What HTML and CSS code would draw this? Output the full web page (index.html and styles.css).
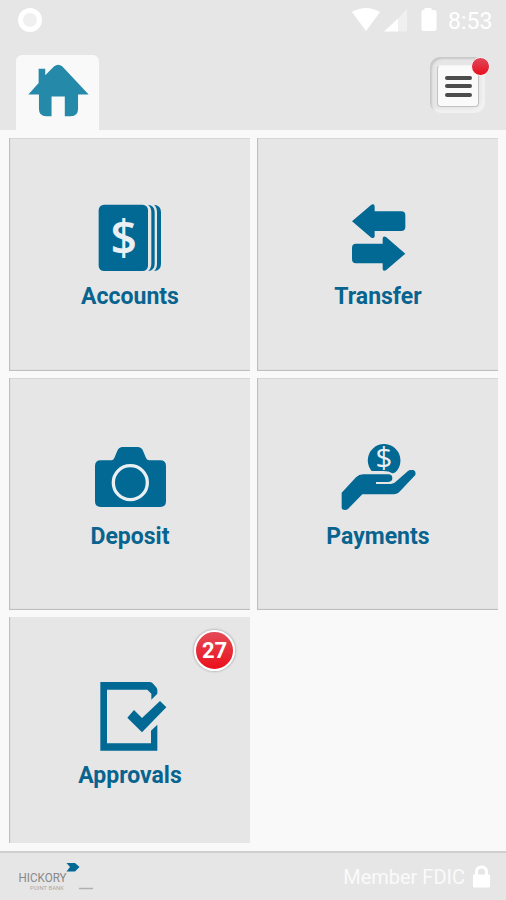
FILE: index.html
```
<!DOCTYPE html>
<html lang="en">
<head>
  <meta charset="UTF-8" />
  <meta name="viewport" content="width=device-width, initial-scale=1.0" />
  <title>Hickory Point Bank</title>
  <link rel="stylesheet" href="styles.css">
</head>
<body>
  <header class="header">
    <div class="status-bar">
      <span class="status-ring"></span>
      <svg class="status-icons" viewBox="0 0 86 26" width="86" height="26">
        <path d="M0 4Q14-4 28 4L14 23Z" />
        <path d="M32 23.500L46 10.500V23.500Z" />
        <path class="faint" d="M46 10.500L55 1V23.500H46Z" />
        <path d="M72.500 0h7v2h3q2 0 2 2v17q0 2-2 2h-11q-2 0-2-2V4q0-2 2-2h1Z" />
      </svg>
      <span class="clock">8:53</span>
    </div>
    <nav class="nav">
      <a class="home-tab" href="#" aria-label="Home">
        <svg viewBox="84 190 182 160" width="61" height="53">
          <path d="M84 282L115 247V204H135V224L162 197Q174 187 186 197L266 282H234V326Q234 348 212 348H194V288H154V348H138Q116 348 116 326V282Z" />
        </svg>
      </a>
      <button class="menu-button" aria-label="Menu">
        <span class="menu-face">
          <span class="bar"></span>
          <span class="bar"></span>
          <span class="bar"></span>
        </span>
        <span class="menu-dot"></span>
      </button>
    </nav>
  </header>

  <main class="tiles">
    <a class="tile" href="#">
      <svg class="icon" viewBox="57 36 243 216">
        <rect x="86" y="44" width="148" height="199" rx="16" />
        <path d="M234 44Q254 46 254 66V221Q254 241 234 243Q244 235 244 221V66Q244 52 234 44Z" />
        <path d="M252 44Q273 46 273 66V221Q273 241 252 243Q261 235 261 221V66Q261 52 252 44Z" />
        <text class="dollar" transform="translate(161 194) scale(.94 1)" font-size="148" text-anchor="middle">$</text>
      </svg>
      <span class="label">Accounts</span>
    </a>

    <a class="tile" href="#">
      <svg class="icon" viewBox="51 36 243 216">
        <path d="M96 94L154 44Q164 40 164 50V64H244Q256 64 256 76V111Q256 123 244 123H164V138Q164 147 154 143Z" />
        <path d="M256 191L198 141Q188 137 188 147V161H108Q96 161 96 173V208Q96 220 108 220H188V236Q188 245 198 241Z" />
      </svg>
      <span class="label">Transfer</span>
    </a>

    <a class="tile" href="#">
      <svg class="icon" viewBox="57 36 243 216">
        <path d="M92 91H124Q130 91 133 84L142 62Q147 51 158 51H203Q214 51 219 62L228 84Q231 91 238 91H271Q288 91 288 108V214Q288 231 271 231H92Q75 231 75 214V108Q75 91 92 91Z" />
        <circle class="lens" cx="181" cy="158" r="51" />
      </svg>
      <span class="label">Deposit</span>
    </a>

    <a class="tile" href="#">
      <svg class="icon" viewBox="51 36 243 216">
        <path d="M155 123A49 49 0 1 1 227 126Q222 130 217 130Q207 123 190 123Z" />
        <text class="dollar thin" x="192" y="114" font-size="88" text-anchor="middle">$</text>
        <path d="M65 188L108 142Q117 133 130 133H205Q217 133 217 145Q217 155 205 156H168V162H213Q222 162 229 154L263 124Q267 120 273 120H280Q289 124 286 135L240 184Q233 193 220 193H127L84 237Q76 243 67 238Q65 236 65 231Z" />
      </svg>
      <span class="label">Payments</span>
    </a>

    <a class="tile" href="#">
      <span class="badge">27</span>
      <svg class="icon" viewBox="87 213 243 216">
        <path d="M121 216H268Q274 216 278 220L288 231Q292 235 292 240V251L274 269V251L262 239H141V400H273V362L292 344V422H121Z" />
        <path d="M202 323L222 300L246 324L300 273L319 292L246 367Z" />
      </svg>
      <span class="label">Approvals</span>
    </a>
  </main>

  <footer class="footer">
    <div class="brand">
      <svg viewBox="0 0 80 30" width="80" height="30">
        <text class="brand-name" x="0.500" y="20" textLength="48" lengthAdjust="spacingAndGlyphs">HICKORY</text>
        <text class="brand-sub" x="12" y="27.500" textLength="34" lengthAdjust="spacingAndGlyphs">POINT BANK</text>
        <path class="brand-mark" d="M48.500 1H57L61.500 5L57 9.500H48.500L52 5Z" />
        <path class="brand-line" d="M61 26.500H75" />
      </svg>
    </div>
    <div class="member">
      <span>Member FDIC</span>
      <svg viewBox="0 0 17 23" width="17" height="23">
        <path class="shackle" d="M3.500 11V7Q3.500 2 8.500 2T13.500 7V11" />
        <rect y="9.500" width="17" height="13" rx="1" />
      </svg>
    </div>
  </footer>
</body>
</html>
```
FILE: styles.css
```
* { box-sizing: border-box; }
body { margin: 0; height: 900px; display: flex; flex-direction: column; background: #f9f9f9; font-family: Roboto, sans-serif; overflow: hidden; }
a { text-decoration: none; }

.header { height: 130px; background: #e6e6e6; }
.status-bar { display: flex; height: 55px; padding: 8px 13px 0 18px; color: #fff; }
.status-ring { width: 24px; height: 24px; border: 5px solid #fff; border-radius: 50%; background: #f0f0f0; }
.status-icons { margin-left: auto; fill: #fff; }
.faint { fill: #f0f0f0; }
.clock { margin-left: 10px; width: 45px; font-size: 23px; line-height: 27px; white-space: nowrap; }

.nav { display: flex; justify-content: space-between; padding: 0 21px 0 16px; }
.home-tab { width: 83px; height: 75px; padding: 9px 0 0 12px; background: #f9f9f9; border-radius: 6px 6px 0 0; }
.home-tab svg { fill: #258aaa; }
.menu-button { position: relative; width: 55px; height: 56px; margin-top: 2px; padding: 8px 7px 7px; border: 0; border-radius: 10px; background: #e6e6e6; box-shadow: inset 2px 2px 2px #c8c8c8, inset -4px -4px 3px #f1f1f1; }
.menu-face { display: flex; flex-direction: column; justify-content: center; align-items: center; gap: 4.500px; width: 42px; height: 42px; background: #fafafa; border: 1px solid #c2c2c2; border-top-color: #f4f4f4; border-radius: 4px; }
.bar { width: 27px; height: 4px; border-radius: 2px; background: #4c4c4c; }
.menu-dot { position: absolute; top: 0; right: -5px; width: 19px; height: 19px; border: 1.500px solid #f8f0f0; border-radius: 50%; background: linear-gradient(#e0485a, #e8101e); }

.tiles { height: 721px; display: grid; grid-template-columns: 241px 241px; grid-template-rows: 233px 232px 226px; gap: 7px; padding: 8px 8px 8px 9px; }
.tile { position: relative; display: flex; flex-direction: column; align-items: center; padding-top: 64px; background: #e6e6e6; box-shadow: inset 2px 0 1px -1px #bbb, inset 0 1px 0 #d6d6d6, inset 0 -2px 1px -1px #bbb; }
.tile:last-child { box-shadow: inset 2px 0 1px -1px #bbb; }
.icon { width: 81px; height: 72px; fill: #026995; }
.dollar { fill: #e9eff2; font-family: "Open Sans", sans-serif; font-weight: 600; }
.thin { font-weight: 400; }
.lens { fill: none; stroke: #e9eff2; stroke-width: 10; }
.label { margin: 8px 0 0 1px; color: #08648f; font-size: 23px; font-weight: 700; line-height: 29px; }
.badge { position: absolute; top: 13px; right: 15px; width: 41px; height: 41px; border: 2px solid #fff; border-radius: 50%; background: linear-gradient(#e34c58, #ea0f1b); box-shadow: 0 0 2px 1px #bbb; color: #fff; font-size: 22px; font-weight: 700; line-height: 38px; text-align: center; }

.footer { display: flex; justify-content: space-between; height: 49px; padding: 9px 16px 0 18px; background: #e6e6e6; border-top: 2px solid #cfcfcf; }
.brand-name { fill: #888; font-size: 12.500px; }
.brand-sub { fill: #aaa; font-size: 5.500px; }
.brand-mark { fill: #026995; }
.brand-line { stroke: #b0b0b0; stroke-width: 1.500; }
.member { display: flex; gap: 8px; color: #fafafa; font-size: 20px; line-height: 30px; white-space: nowrap; }
.member svg { margin-top: 3px; fill: #fff; }
.shackle { fill: none; stroke: #fff; stroke-width: 3; }
```
